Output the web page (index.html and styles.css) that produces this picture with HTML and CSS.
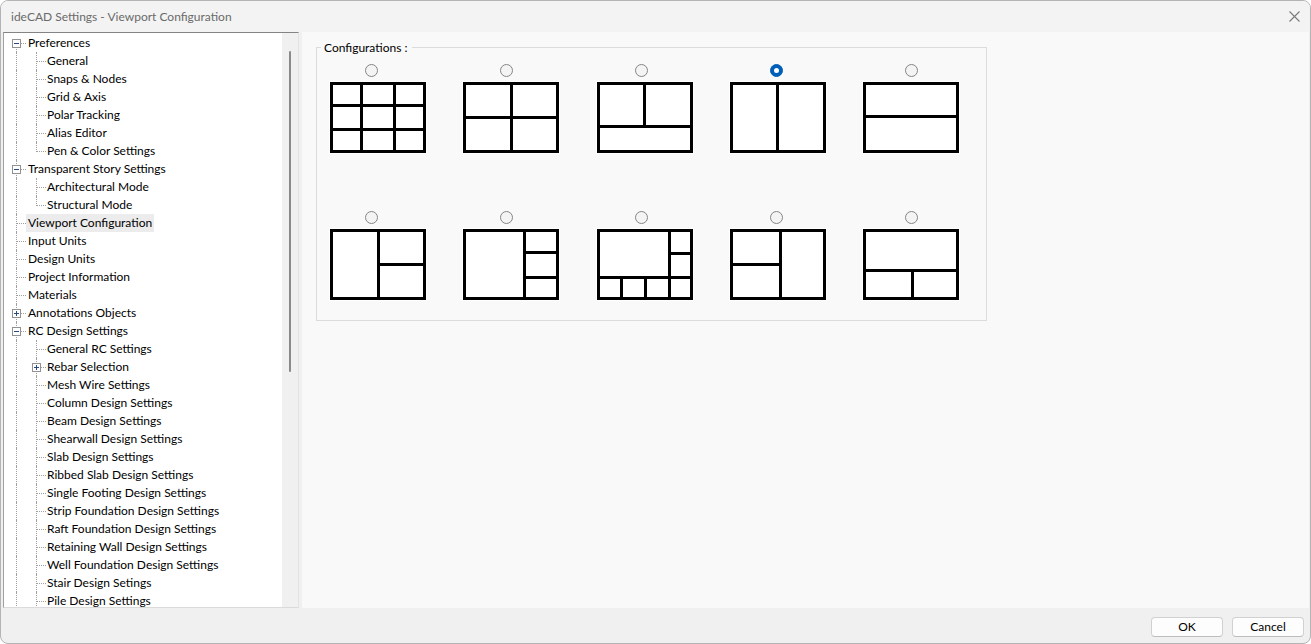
FILE: index.html
```html
<!DOCTYPE html>
<html lang="en">
<head>
<meta charset="utf-8">
<title>ideCAD Settings - Viewport Configuration</title>
<link rel="stylesheet" href="styles.css">
</head>
<body>
<div class="window">
  <div class="titlebar">
    <span class="title">ideCAD Settings - Viewport Configuration</span>
    <svg class="close" width="11" height="11" viewBox="0 0 11 11"><path d="M0.5 0.5 L10.5 10.5 M10.5 0.5 L0.5 10.5" stroke="#7a7a7a" stroke-width="1.1" fill="none"/></svg>
  </div>
  <div class="main">
    <div class="tree">
      <div class="list">
        <div class="row"><span class="g f"><i class="bx"></i></span><span class="lbl">Preferences</span></div>
        <div class="row"><span class="g v"></span><span class="g t"></span><span class="lbl sub">General</span></div>
        <div class="row"><span class="g v"></span><span class="g t"></span><span class="lbl sub">Snaps &amp; Nodes</span></div>
        <div class="row"><span class="g v"></span><span class="g t"></span><span class="lbl sub">Grid &amp; Axis</span></div>
        <div class="row"><span class="g v"></span><span class="g t"></span><span class="lbl sub">Polar Tracking</span></div>
        <div class="row"><span class="g v"></span><span class="g t"></span><span class="lbl sub">Alias Editor</span></div>
        <div class="row"><span class="g v"></span><span class="g l"></span><span class="lbl sub">Pen &amp; Color Settings</span></div>
        <div class="row"><span class="g t"><i class="bx"></i></span><span class="lbl">Transparent Story Settings</span></div>
        <div class="row"><span class="g v"></span><span class="g t"></span><span class="lbl sub">Architectural Mode</span></div>
        <div class="row"><span class="g v"></span><span class="g l"></span><span class="lbl sub">Structural Mode</span></div>
        <div class="row"><span class="g t"></span><span class="lbl sel">Viewport Configuration</span></div>
        <div class="row"><span class="g t"></span><span class="lbl">Input Units</span></div>
        <div class="row"><span class="g t"></span><span class="lbl">Design Units</span></div>
        <div class="row"><span class="g t"></span><span class="lbl">Project Information</span></div>
        <div class="row"><span class="g t"></span><span class="lbl">Materials</span></div>
        <div class="row"><span class="g t"><i class="bx plus"></i></span><span class="lbl">Annotations Objects</span></div>
        <div class="row"><span class="g t"><i class="bx"></i></span><span class="lbl">RC Design Settings</span></div>
        <div class="row"><span class="g v"></span><span class="g t"></span><span class="lbl sub">General RC Settings</span></div>
        <div class="row"><span class="g v"></span><span class="g t"><i class="bx plus"></i></span><span class="lbl sub">Rebar Selection</span></div>
        <div class="row"><span class="g v"></span><span class="g t"></span><span class="lbl sub">Mesh Wire Settings</span></div>
        <div class="row"><span class="g v"></span><span class="g t"></span><span class="lbl sub">Column Design Settings</span></div>
        <div class="row"><span class="g v"></span><span class="g t"></span><span class="lbl sub">Beam Design Settings</span></div>
        <div class="row"><span class="g v"></span><span class="g t"></span><span class="lbl sub">Shearwall Design Settings</span></div>
        <div class="row"><span class="g v"></span><span class="g t"></span><span class="lbl sub">Slab Design Settings</span></div>
        <div class="row"><span class="g v"></span><span class="g t"></span><span class="lbl sub">Ribbed Slab Design Settings</span></div>
        <div class="row"><span class="g v"></span><span class="g t"></span><span class="lbl sub">Single Footing Design Settings</span></div>
        <div class="row"><span class="g v"></span><span class="g t"></span><span class="lbl sub">Strip Foundation Design Settings</span></div>
        <div class="row"><span class="g v"></span><span class="g t"></span><span class="lbl sub">Raft Foundation Design Settings</span></div>
        <div class="row"><span class="g v"></span><span class="g t"></span><span class="lbl sub">Retaining Wall Design Settings</span></div>
        <div class="row"><span class="g v"></span><span class="g t"></span><span class="lbl sub">Well Foundation Design Settings</span></div>
        <div class="row"><span class="g v"></span><span class="g t"></span><span class="lbl sub">Stair Design Setings</span></div>
        <div class="row"><span class="g v"></span><span class="g t"></span><span class="lbl sub">Pile Design Settings</span></div>
      </div>
      <div class="scroll"><div class="thumb"></div></div>
    </div>
    <div class="content">
      <div class="group">
        <span class="legend">Configurations :</span>
        <div class="radios">
          <span class="rd"></span><span class="rd"></span><span class="rd"></span><span class="rd on"></span><span class="rd"></span>
        </div>
        <div class="icons">
          <svg class="ic" width="96" height="71" viewBox="0 0 96 71"><rect width="96" height="71" fill="#fff"/><rect x="1.5" y="1.5" width="93" height="68" fill="none" stroke="#000" stroke-width="3"/><rect x="30" y="0" width="3" height="71"/><rect x="63" y="0" width="3" height="71"/><rect x="0" y="22" width="96" height="3"/><rect x="0" y="46" width="96" height="3"/></svg>
          <svg class="ic" width="96" height="71" viewBox="0 0 96 71"><rect width="96" height="71" fill="#fff"/><rect x="1.5" y="1.5" width="93" height="68" fill="none" stroke="#000" stroke-width="3"/><rect x="47" y="0" width="3" height="71"/><rect x="0" y="34" width="96" height="3"/></svg>
          <svg class="ic" width="96" height="71" viewBox="0 0 96 71"><rect width="96" height="71" fill="#fff"/><rect x="1.5" y="1.5" width="93" height="68" fill="none" stroke="#000" stroke-width="3"/><rect x="46" y="0" width="3" height="45"/><rect x="0" y="43" width="96" height="3"/></svg>
          <svg class="ic" width="96" height="71" viewBox="0 0 96 71"><rect width="96" height="71" fill="#fff"/><rect x="1.5" y="1.5" width="93" height="68" fill="none" stroke="#000" stroke-width="3"/><rect x="46" y="0" width="3" height="71"/></svg>
          <svg class="ic" width="96" height="71" viewBox="0 0 96 71"><rect width="96" height="71" fill="#fff"/><rect x="1.5" y="1.5" width="93" height="68" fill="none" stroke="#000" stroke-width="3"/><rect x="0" y="33" width="96" height="3"/></svg>
        </div>
        <div class="radios">
          <span class="rd"></span><span class="rd"></span><span class="rd"></span><span class="rd"></span><span class="rd"></span>
        </div>
        <div class="icons">
          <svg class="ic" width="96" height="71" viewBox="0 0 96 71"><rect width="96" height="71" fill="#fff"/><rect x="1.5" y="1.5" width="93" height="68" fill="none" stroke="#000" stroke-width="3"/><rect x="47" y="0" width="3" height="71"/><rect x="47" y="34" width="49" height="3"/></svg>
          <svg class="ic" width="96" height="71" viewBox="0 0 96 71"><rect width="96" height="71" fill="#fff"/><rect x="1.5" y="1.5" width="93" height="68" fill="none" stroke="#000" stroke-width="3"/><rect x="60" y="0" width="3" height="71"/><rect x="60" y="22" width="36" height="3"/><rect x="60" y="47" width="36" height="3"/></svg>
          <svg class="ic" width="96" height="71" viewBox="0 0 96 71"><rect width="96" height="71" fill="#fff"/><rect x="1.5" y="1.5" width="93" height="68" fill="none" stroke="#000" stroke-width="3"/><rect x="71" y="0" width="3" height="71"/><rect x="71" y="23" width="25" height="3"/><rect x="0" y="47" width="96" height="3"/><rect x="23" y="47" width="3" height="24"/><rect x="47" y="47" width="3" height="24"/></svg>
          <svg class="ic" width="96" height="71" viewBox="0 0 96 71"><rect width="96" height="71" fill="#fff"/><rect x="1.5" y="1.5" width="93" height="68" fill="none" stroke="#000" stroke-width="3"/><rect x="49" y="0" width="3" height="71"/><rect x="0" y="34" width="50" height="3"/></svg>
          <svg class="ic" width="96" height="71" viewBox="0 0 96 71"><rect width="96" height="71" fill="#fff"/><rect x="1.5" y="1.5" width="93" height="68" fill="none" stroke="#000" stroke-width="3"/><rect x="0" y="40" width="96" height="3"/><rect x="48" y="40" width="3" height="31"/></svg>
        </div>
      </div>
    </div>
  </div>
  <div class="footer">
    <button class="btn">OK</button>
    <button class="btn">Cancel</button>
  </div>
</div>
</body>
</html>
```

FILE: styles.css
```css
* { box-sizing: border-box; }
html, body { margin: 0; padding: 0; }
body {
  width: 1311px;
  height: 644px;
  background: #ffffff;
  font-family: Lato, "Noto Sans", sans-serif;
  font-size: 12px;
  color: #000;
  overflow: hidden;
}
.window {
  width: 1311px;
  height: 644px;
  border: 1px solid #b4b4b4;
  border-radius: 8px;
  background: #f0f0f0;
  display: flex;
  flex-direction: column;
  overflow: hidden;
}
.titlebar {
  height: 31px;
  flex: none;
  background: #f3f3f3;
  display: flex;
  align-items: center;
  justify-content: space-between;
  padding: 0 10px 0 10px;
}
.title {
  color: #6a6a6a;
  font-size: 12px;
  line-height: 16px;
  margin-top: 0;
}
.close { display: block; margin-right: 0; }
.main {
  height: 576px;
  flex: none;
  display: flex;
}
.tree {
  width: 296px;
  height: 576px;
  margin-left: 2px;
  flex: none;
  background: #fff;
  border-top: 1px solid #848484;
  border-left: 1px solid #a0a0a0;
  border-right: 1px solid #e3e3e3;
  border-bottom: 1px solid #dadada;
  display: flex;
  overflow: hidden;
}
.list {
  flex: 1;
  padding: 1px 0 0 2px;
  overflow: hidden;
}
.row {
  height: 18px;
  display: flex;
  align-items: stretch;
  white-space: nowrap;
}
.g {
  position: relative;
  width: 20px;
  height: 18px;
  flex: none;
}
.g.v::before, .g.t::before, .g.l::before, .g.f::before {
  content: "";
  position: absolute;
  left: 10px;
  top: 0;
  height: 18px;
  border-left: 1px dotted #a0a0a0;
}
.g.l::before { height: 10px; }
.g.f::before { top: 10px; height: 8px; }
.g.t::after, .g.l::after, .g.f::after {
  content: "";
  position: absolute;
  left: 11px;
  top: 9px;
  width: 9px;
  border-top: 1px dotted #a0a0a0;
}
.bx {
  position: absolute;
  left: 6px;
  top: 5px;
  width: 9px;
  height: 9px;
  border: 1px solid #929292;
  background: #fff;
  z-index: 1;
}
.bx::before {
  content: "";
  position: absolute;
  left: 1px;
  top: 3px;
  width: 5px;
  height: 1px;
  background: #2a4a85;
}
.bx.plus::after {
  content: "";
  position: absolute;
  left: 3px;
  top: 1px;
  width: 1px;
  height: 5px;
  background: #2a4a85;
}
.lbl {
  line-height: 18px;
  padding: 0 2px;
}
.lbl.sub { margin-left: -1px; }
.lbl.sel { background: #ececec; }
.scroll {
  width: 16px;
  flex: none;
  background: #f0f0f0;
  padding: 18px 0 0 7px;
}
.thumb {
  width: 2px;
  height: 321px;
  background: #8a8a8a;
  border-radius: 1px;
}
.content {
  flex: 1;
  margin-left: 3px;
  margin-right: 1px;
  background: #f9f9f9;
  padding: 15px 0 0 14px;
}
.group {
  position: relative;
  width: 671px;
  height: 274px;
  border: 1px solid #dcdcdc;
  padding: 16px 0 0 13px;
}
.legend {
  position: absolute;
  left: 4px;
  top: -8px;
  padding: 0 5px 0 3px;
  background: #f9f9f9;
  line-height: 16px;
  color: #000;
}
.radios {
  display: flex;
  gap: 122px;
  padding-left: 35px;
  height: 13px;
  margin-bottom: 5px;
}
.radios + .icons + .radios { margin-top: 58px; }
.rd {
  width: 13px;
  height: 13px;
  border: 1px solid #858585;
  border-radius: 50%;
  background: #f4f4f4;
  flex: none;
}
.rd.on {
  background: #005fb8;
  border-color: #005fb8;
  display: grid;
  place-items: center;
}
.rd.on::after {
  content: "";
  width: 5px;
  height: 5px;
  border-radius: 50%;
  background: #fff;
}
.icons {
  display: grid;
  grid-template-columns: 133px 134px 133px 133px 96px;
  height: 71px;
}
.ic {
  display: block;
  box-shadow: 0 0 0 1px #fff;
}
.footer {
  flex: 1;
  display: flex;
  justify-content: flex-end;
  gap: 9px;
  padding: 9px 6px 0 0;
}
.btn {
  width: 72px;
  height: 20px;
  border: 1px solid #d1d1d1;
  border-bottom-color: #bdbdbd;
  border-radius: 4px;
  background: #fdfdfd;
  font-family: Lato, "Noto Sans", sans-serif;
  font-size: 12px;
  color: #000;
  padding: 0;
  line-height: 18px;
}
```
